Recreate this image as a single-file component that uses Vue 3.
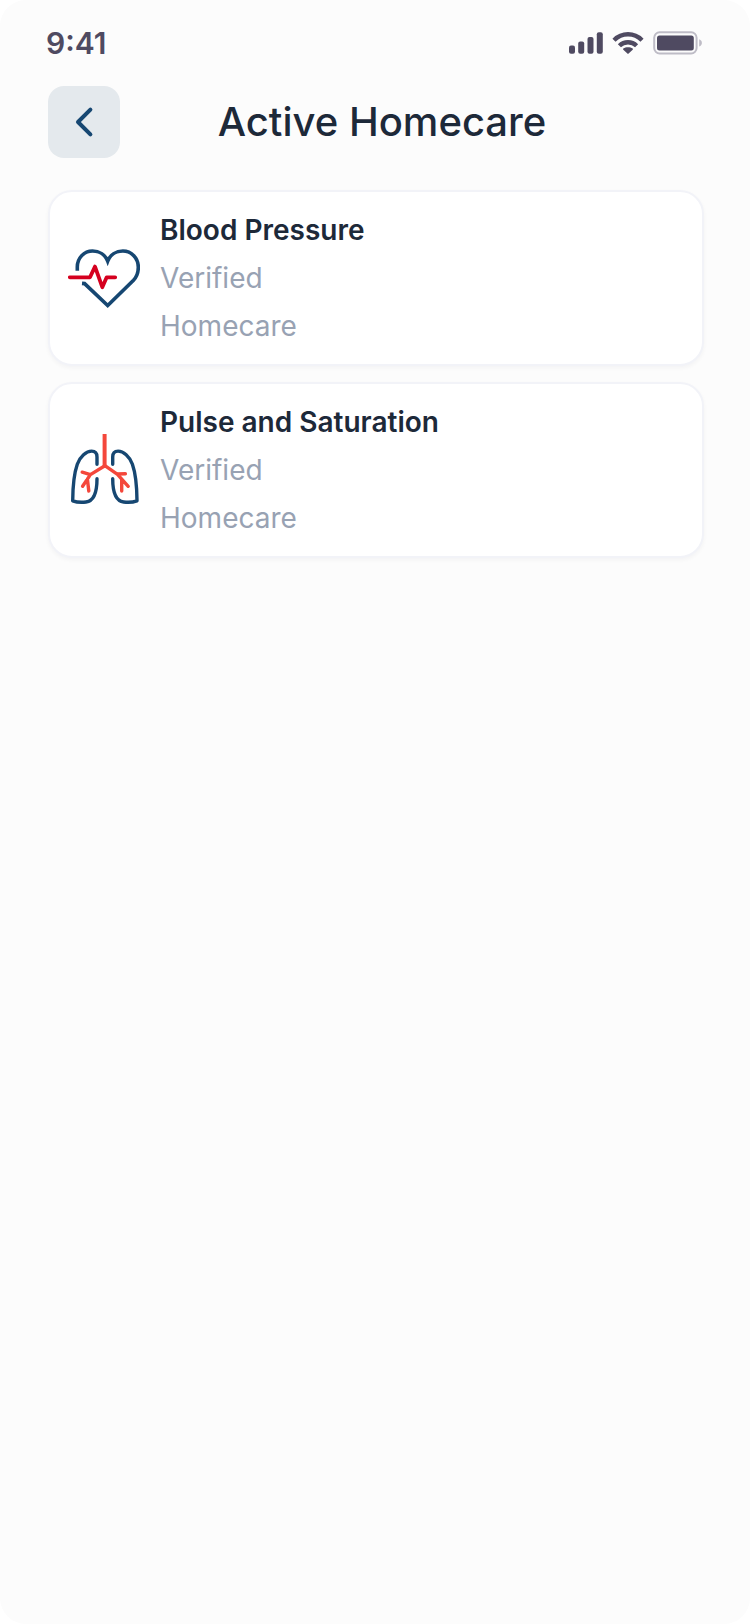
<script setup>
const records = [
  { id: 'blood-pressure', title: 'Blood Pressure', status: 'Verified', kind: 'Homecare', icon: 'heart' },
  { id: 'pulse-saturation', title: 'Pulse and Saturation', status: 'Verified', kind: 'Homecare', icon: 'lungs' },
]
</script>

<template>
  <div class="screen">
    <div class="status-bar">
      <span class="clock">9:41</span>
      <div class="indicators">
        <svg class="signal" viewBox="0 0 34 24" aria-hidden="true">
          <rect x="0" y="14.5" width="6" height="8.3" rx="2" />
          <rect x="9.2" y="10.6" width="6" height="12.2" rx="2" />
          <rect x="18.5" y="6" width="6" height="16.8" rx="2" />
          <rect x="27.8" y="1.3" width="6" height="21.5" rx="2" />
        </svg>
        <svg class="wifi" viewBox="0 0 32 24" aria-hidden="true">
          <path class="arc" d="M2 9.2C9.8 1.3 22.2 1.3 30 9.2" />
          <path class="arc" d="M7.4 14.7C12.2 10 19.8 10 24.6 14.7" />
          <path d="M11.3 17.6C13.9 15.7 18.1 15.7 20.7 17.6C21.1 18 21.1 18.3 20.7 18.7L16.6 22.6C16.2 23 15.8 23 15.4 22.6L11.3 18.7C10.9 18.3 10.9 18 11.3 17.6Z" />
        </svg>
        <svg class="battery" viewBox="0 0 49 24" aria-hidden="true">
          <rect class="case" x="1.2" y="1.3" width="42.4" height="21.2" rx="5.5" />
          <rect x="4" y="4.4" width="36.8" height="15.2" rx="2.5" />
          <path class="nub" d="M46.2 8.2C49.8 9.8 49.8 14 46.2 15.6Z" />
        </svg>
      </div>
    </div>

    <header class="header">
      <button class="back" type="button" aria-label="Back">
        <svg viewBox="0 0 72 72" aria-hidden="true">
          <path d="M42.4 23.6L30 36L42.4 48.4" />
        </svg>
      </button>
      <h1 class="title">Active Homecare</h1>
    </header>

    <main class="list">
      <article v-for="record in records" :key="record.id" class="card">
        <svg v-if="record.icon === 'heart'" class="icon heart" viewBox="0 0 72 72" aria-hidden="true">
          <path class="outline" d="M9.3 28.8V25C9.3 16 16 9 24.5 9C31.2 9 37.3 12.8 39.7 19.2C42.1 12.8 48.2 9 54.9 9C63.5 9 70.3 16 70.3 25.2C70.3 30.5 68.6 35 65.5 38.2L39.7 63.6L16.6 41.6L14 41.4" />
          <path class="pulse" d="M1.8 35.3H22L27 24.6L34.3 45.2L38.7 35.3H47.2" />
        </svg>
        <svg v-else class="icon lungs" viewBox="0 0 72 72" aria-hidden="true">
          <path class="outline" d="M29 30.3V23C29 19.2 26.8 17.1 23.6 17.1C18.5 17.2 12 22.4 9.3 30.3C5.6 40.8 4.8 55 4.7 66.8C9 68.4 13.8 68.5 18 68C26.8 66.9 29 56.6 29 44.7" />
          <path class="outline" d="M44.7 30.3V23C44.7 19.2 46.9 17.1 50.1 17.1C55.2 17.2 61.7 22.4 64.4 30.3C68.1 40.8 68.9 55 69 66.8C64.7 68.4 59.9 68.5 55.7 68C46.9 66.9 44.7 56.6 44.7 44.7" />
          <path class="airway" d="M36.6 0V31.7" />
          <path class="branch" d="M36.9 31.7L22.4 40.6L14.6 52.3M22.4 40.6L14.2 38.2M19.4 45.2L20.8 57M36.9 31.7L49.5 40.4L60.2 52.3M49.5 40L57.4 39.8M53.7 45.3V57" />
        </svg>
        <div class="details">
          <h2 class="name">{{ record.title }}</h2>
          <p class="meta">{{ record.status }}</p>
          <p class="meta">{{ record.kind }}</p>
        </div>
      </article>
    </main>
  </div>
</template>

<style>
body {
  background: #fff;
}
</style>

<style scoped>
.screen {
  min-height: 100vh;
  box-sizing: border-box;
  padding: 0 46px 48px;
  border-radius: 26px;
  background: #fcfcfc;
  color: #1d2939;
  font-family: Inter, "Liberation Sans", sans-serif;
}

.status-bar {
  display: flex;
  align-items: center;
  justify-content: space-between;
  height: 86px;
  padding-right: 2px;
}

.clock {
  color: #4f4a61;
  font-size: 30px;
  font-weight: 600;
  line-height: 36px;
}

.indicators {
  display: flex;
  align-items: center;
  gap: 9px;
  fill: #4f4a61;
}

.signal {
  width: 34px;
  height: 24px;
}

.wifi {
  width: 32px;
  height: 24px;
}

.arc {
  fill: none;
  stroke: #4f4a61;
  stroke-width: 4.4;
}

.battery {
  width: 49px;
  height: 24px;
}

.case {
  fill: none;
  stroke: #bebcc6;
  stroke-width: 2;
}

.nub {
  fill: #bebcc6;
}

.header {
  display: flex;
  align-items: center;
  padding-left: 2px;
}

.back {
  flex: none;
  width: 72px;
  height: 72px;
  padding: 0;
  border: 0;
  border-radius: 16px;
  background: #e4e9ed;
  cursor: pointer;
}

.back svg {
  display: block;
  fill: none;
  stroke: #164772;
  stroke-width: 4;
  stroke-linecap: round;
  stroke-linejoin: round;
}

.title {
  flex: 1;
  margin: 0;
  padding-right: 60px;
  font-size: 40px;
  font-weight: 500;
  line-height: 48px;
  text-align: center;
}

.list {
  display: flex;
  flex-direction: column;
  gap: 16px;
  margin-top: 32px;
  padding-left: 2px;
}

.card {
  display: flex;
  align-items: center;
  gap: 20px;
  padding: 14px 18px;
  border: 2px solid #f2f3f8;
  border-radius: 24px;
  background: #fff;
  box-shadow: 0 2px 4px rgba(16, 24, 40, 0.04);
}

.icon {
  flex: none;
  width: 72px;
  height: 72px;
  fill: none;
}

.outline {
  stroke: #164772;
  stroke-width: 3.6;
}

.lungs .outline {
  stroke-width: 3.4;
  stroke-linecap: round;
  stroke-linejoin: round;
}

.pulse {
  stroke: #d5001f;
  stroke-width: 3.8;
  stroke-linecap: round;
  stroke-linejoin: round;
}

.airway {
  stroke: #f4473b;
  stroke-width: 4;
}

.branch {
  stroke: #f4473b;
  stroke-width: 3.4;
  stroke-linecap: round;
  stroke-linejoin: round;
}

.name,
.meta {
  margin: 0;
  font-size: 28px;
  line-height: 48px;
}

.name {
  font-weight: 600;
}

.meta {
  color: #98a2b3;
  font-weight: 400;
}
</style>
